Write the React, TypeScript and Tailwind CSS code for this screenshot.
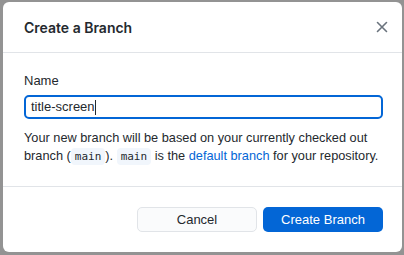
import React from "react";

const mono = { fontFamily: "'DejaVu Sans Mono', monospace" };

export default function App() {
  return (
    <div
      className="w-[404px] h-[255px] bg-[#939393] pt-[2px] pl-[3px] pr-[2px] pb-[3px]"
      style={{ fontFamily: "'Liberation Sans', Arial, sans-serif" }}
    >
      <div className="w-[399px] h-[250px] bg-white rounded-[6px] flex flex-col text-[#24292e]">
        <div className="h-[51px] flex items-center justify-between pl-[21px] pr-[14px] border-b border-[#e1e4e8] shrink-0">
          <span className="text-[14px] font-semibold" style={{ fontFamily: "Inter, sans-serif" }}>Create a Branch</span>
          <svg width="12" height="12" viewBox="0 0 12 12" className="text-[#6a737d]">
            <path d="M1.5 1.5 L10.5 10.5 M10.5 1.5 L1.5 10.5" stroke="currentColor" strokeWidth="1.6" strokeLinecap="round" />
          </svg>
        </div>
        <div className="flex-1 pl-[21px] pr-[19px] pt-[20px] border-b border-[#e1e4e8]">
          <div className="text-[13px] leading-[16px]">Name</div>
          <div className="mt-[6px] h-[24px] rounded-[5px] border-[2px] border-[#0366d6] flex items-center pl-[5px] text-[13px]">
            title-screen<span className="inline-block w-[1px] h-[15px] bg-[#24292e]"></span>
          </div>
          <div className="mt-[10px] text-[12.75px] leading-[18px] whitespace-nowrap">
            Your new branch will be based on your currently checked out
            <br />
            branch (
            <span className="text-[11px] bg-[#f1f6fc] rounded-[4px] px-[4px] py-[2px]" style={mono}>main</span>
            ).{" "}
            <span className="text-[11px] bg-[#f1f6fc] rounded-[4px] px-[4px] py-[2px]" style={mono}>main</span>{" "}
            is the <span className="text-[#0366d6]">default branch</span> for your repository.
          </div>
        </div>
        <div className="h-[65px] flex items-start justify-end gap-[6px] pr-[19px] pt-[20px] shrink-0">
          <button className="w-[120px] h-[25px] rounded-[5px] border border-[#e1e4e8] bg-[#fafbfc] text-[13px] text-[#24292e]">Cancel</button>
          <button className="w-[120px] h-[25px] rounded-[5px] bg-[#0366d6] text-[13px] text-white">Create Branch</button>
        </div>
      </div>
    </div>
  );
}
